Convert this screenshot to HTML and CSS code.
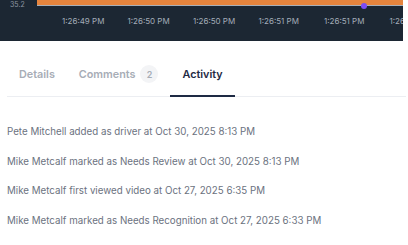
FILE: index.html
```html
<!DOCTYPE html>
<html lang="en">
<head>
    <meta charset="UTF-8">
    <meta name="viewport" content="width=device-width, initial-scale=1.0">
    <title>Activity</title>
    <link rel="stylesheet" href="styles.css">
</head>
<body>
    <div class="chart">
        <div class="plot-row">
            <div class="y-label">35.2</div>
            <div class="bar">
                <span class="marker"></span>
            </div>
        </div>
        <div class="x-axis">
            <span>1:26:49 PM</span>
            <span>1:26:50 PM</span>
            <span>1:26:50 PM</span>
            <span>1:26:51 PM</span>
            <span>1:26:51 PM</span>
            <span>1:26:52 PM</span>
        </div>
    </div>

    <div class="tabs">
        <div class="tab">Details</div>
        <div class="tab">Comments <span class="badge">2</span></div>
        <div class="tab active">Activity</div>
    </div>

    <ul class="activity">
        <li>Pete Mitchell added as driver at Oct 30, 2025 8:13 PM</li>
        <li>Mike Metcalf marked as Needs Review at Oct 30, 2025 8:13 PM</li>
        <li>Mike Metcalf first viewed video at Oct 27, 2025 6:35 PM</li>
        <li>Mike Metcalf marked as Needs Recognition at Oct 27, 2025 6:33 PM</li>
    </ul>
</body>
</html>
```

FILE: styles.css
```css
body {
    margin: 0;
    background-color: #fff;
    font-family: Inter, "Noto Sans", sans-serif;
    overflow: hidden;
}

.chart {
    width: 403px;
    height: 41px;
    background-color: #1c2733;
    overflow: hidden;
}

.plot-row {
    display: flex;
    height: 7px;
}

.y-label {
    width: 37px;
    padding-left: 10px;
    box-sizing: border-box;
    font-size: 7px;
    line-height: 8px;
    color: #8d96a2;
    margin-top: 1px;
}

.bar {
    position: relative;
    flex: 1;
    height: 5px;
    background-color: #e5843d;
    border-bottom: 1px solid #a9b0b8;
}

.marker {
    position: absolute;
    left: 324px;
    top: 3px;
    width: 6px;
    height: 6px;
    border-radius: 50%;
    background-color: #7a4cf5;
}

.x-axis {
    display: flex;
    padding-left: 62px;
    margin-top: 9px;
    white-space: nowrap;
}

.x-axis span {
    width: 65.5px;
    flex-shrink: 0;
    font-size: 8px;
    color: #a3acb8;
}

.tabs {
    display: flex;
    margin: 13px 2px 0 7px;
    border-bottom: 1px solid #eceef2;
}

.tab {
    display: flex;
    align-items: center;
    gap: 5px;
    padding: 11px 12px 12px;
    font-size: 10.8px;
    font-weight: 600;
    color: #a7adb6;
    border-bottom: 2px solid transparent;
    margin-bottom: -1px;
}

.tab.active {
    color: #1e2a44;
    border-bottom-color: #1e2a44;
}

.badge {
    width: 18px;
    height: 18px;
    border-radius: 50%;
    background-color: #f3f4f6;
    display: flex;
    align-items: center;
    justify-content: center;
    font-size: 9px;
    color: #a7adb6;
}

.activity {
    list-style: none;
    margin: 0;
    padding: 0 0 0 7px;
}

.activity li {
    font-size: 9.75px;
    color: #6b7280;
    line-height: 12px;
    margin-top: 17.7px;
}

.activity li:first-child {
    margin-top: 29px;
}
```
